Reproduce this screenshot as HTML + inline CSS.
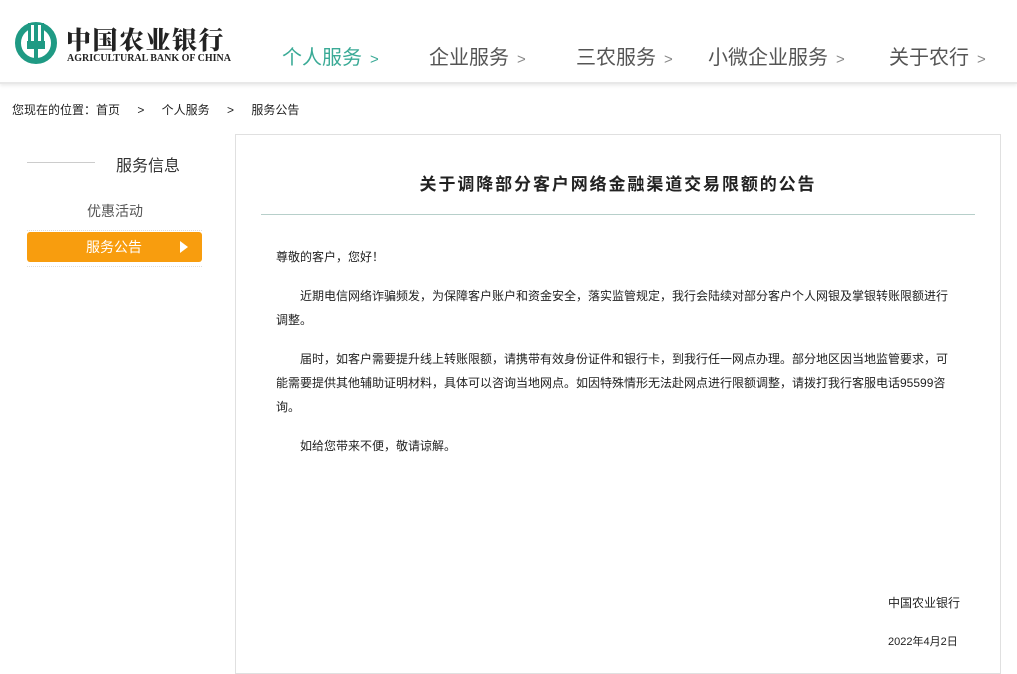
<!DOCTYPE html>
<html><head><meta charset="utf-8"><style>
*{margin:0;padding:0;box-sizing:border-box}
body{width:1017px;height:663px;overflow:hidden;background:#fff;font-family:"Liberation Sans","Noto Sans CJK SC",sans-serif;color:#222;position:relative}
.hdr{position:absolute;left:0;top:0;width:1017px;height:84px;background:#fff;border-bottom:2px solid #e8e8e8;box-shadow:0 2px 3px #eee}
.nav{position:absolute;top:41px;font-size:20px;color:#555;white-space:nowrap}
.nav .a{font-size:15px;margin-left:8px;color:#888}
.bc{position:absolute;left:12px;top:101px;font-size:12px;color:#222;word-spacing:1px}
.box{position:absolute;left:235px;top:134px;width:766px;height:540px;border:1px solid #e0e0e0}
p{position:absolute;left:276px;width:673px;font-size:12px;line-height:24px;color:#222}
</style></head><body>
<div class="hdr">
<svg style="position:absolute;left:14px;top:21px" width="44" height="44" viewBox="0 0 44 44">
<circle cx="22" cy="22" r="18" fill="none" stroke="#1f9a84" stroke-width="6"/>
<rect x="14" y="2" width="16" height="18" fill="#1f9a84"/>
<rect x="17" y="4" width="3" height="16" fill="#fff"/><rect x="24" y="4" width="3" height="16" fill="#fff"/>
<rect x="13" y="20" width="18" height="8" fill="#1f9a84"/>
<rect x="20" y="26" width="4" height="16" fill="#1f9a84"/>
</svg>
<div style="position:absolute;left:66px;top:21px;font-family:'Noto Serif CJK SC',serif;font-weight:900;font-size:25px;letter-spacing:1.5px;color:#222">中国农业银行</div>
<div style="position:absolute;left:67px;top:53px;font-family:'Liberation Serif',serif;font-weight:bold;font-size:10px;color:#222;letter-spacing:0">AGRICULTURAL BANK OF CHINA</div>
<div class="nav" style="left:282px;color:#3aaa96">个人服务<span class="a" style="color:#3aaa96">&gt;</span></div>
<div class="nav" style="left:429px">企业服务<span class="a">&gt;</span></div>
<div class="nav" style="left:576px">三农服务<span class="a">&gt;</span></div>
<div class="nav" style="left:708px">小微企业服务<span class="a">&gt;</span></div>
<div class="nav" style="left:889px">关于农行<span class="a">&gt;</span></div>
</div>
<div class="bc">您现在的位置：首页 &nbsp;&nbsp;&nbsp;&gt;&nbsp;&nbsp;&nbsp; 个人服务 &nbsp;&nbsp;&nbsp;&gt;&nbsp;&nbsp;&nbsp; 服务公告</div>
<div style="position:absolute;left:27px;top:162px;width:68px;height:1px;background:#ccc"></div>
<div style="position:absolute;left:116px;top:152px;font-size:16px;color:#333">服务信息</div>
<div style="position:absolute;left:87px;top:201px;font-size:14px;color:#555">优惠活动</div>
<div style="position:absolute;left:27px;top:230px;width:175px;height:1px;border-top:1px dotted #ddd"></div>
<div style="position:absolute;left:27px;top:232px;width:175px;height:30px;background:#f89d0e;border-radius:3px;color:#fff;font-size:14px;line-height:30px;padding-left:59px">服务公告<span style="position:absolute;left:153px;top:9px;width:0;height:0;border-left:8px solid #fff;border-top:6px solid transparent;border-bottom:6px solid transparent"></span></div>
<div style="position:absolute;left:27px;top:266px;width:175px;height:1px;border-top:1px dotted #ddd"></div>
<div class="box"></div>
<div style="position:absolute;left:236px;top:170px;width:764px;text-align:center;font-size:17px;letter-spacing:1.9px;font-weight:bold;color:#222">关于调降部分客户网络金融渠道交易限额的公告</div>
<div style="position:absolute;left:261px;top:214px;width:714px;height:1px;background:#b7cfca"></div>
<p style="top:245px">尊敬的客户，您好！</p>
<p style="top:284px">&emsp;&emsp;近期电信网络诈骗频发，为保障客户账户和资金安全，落实监管规定，我行会陆续对部分客户个人网银及掌银转账限额进行调整。</p>
<p style="top:347px">&emsp;&emsp;届时，如客户需要提升线上转账限额，请携带有效身份证件和银行卡，到我行任一网点办理。部分地区因当地监管要求，可能需要提供其他辅助证明材料，具体可以咨询当地网点。如因特殊情形无法赴网点进行限额调整，请拨打我行客服电话95599咨询。</p>
<p style="top:434px">&emsp;&emsp;如给您带来不便，敬请谅解。</p>
<div style="position:absolute;left:888px;top:594px;font-size:12px">中国农业银行</div>
<div style="position:absolute;left:888px;top:633px;font-size:11px">2022年4月2日</div>
</body></html>
